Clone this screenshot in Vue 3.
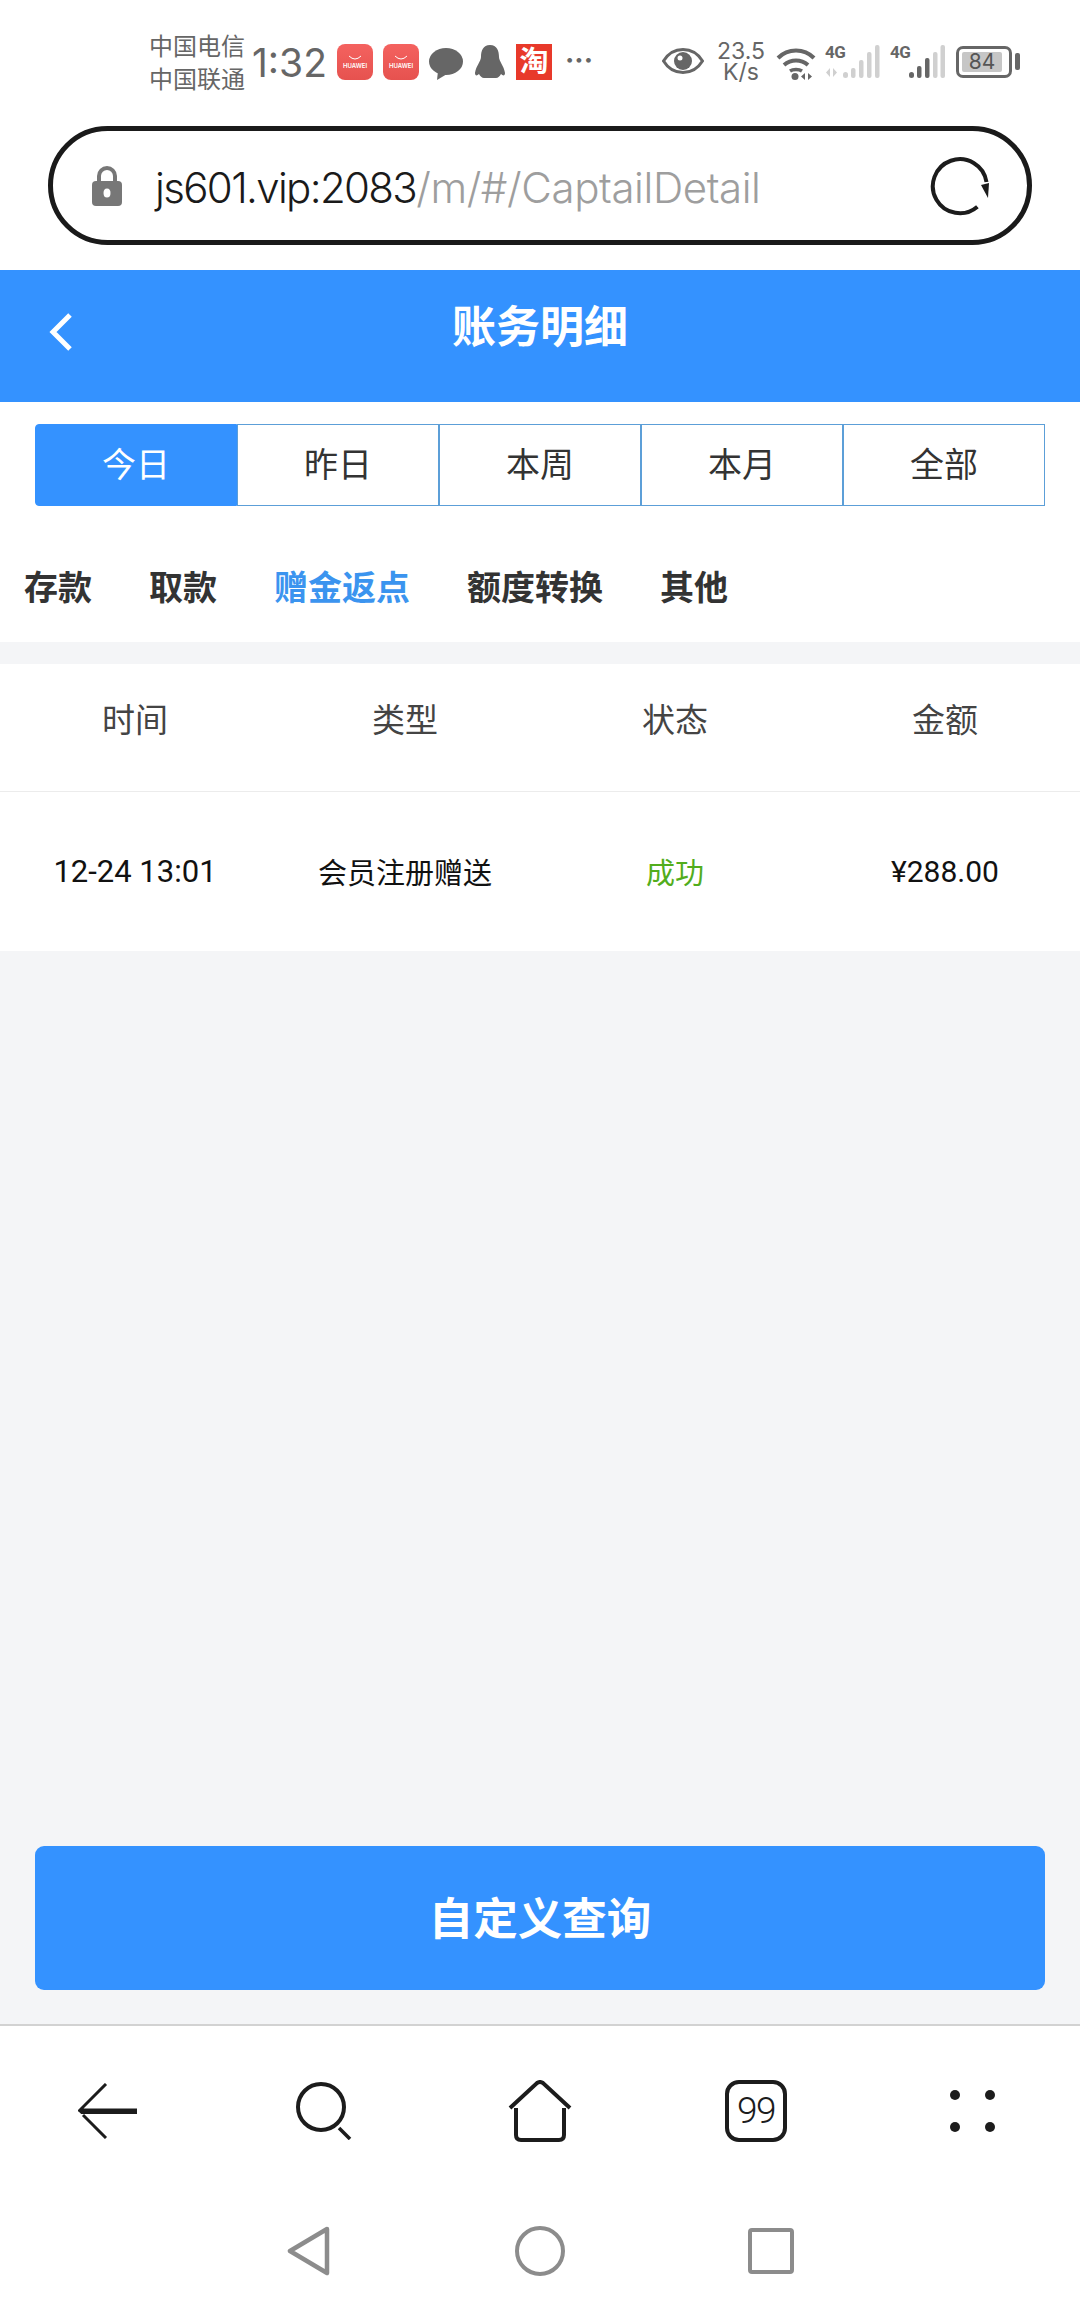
<script setup>
const ranges = ['今日', '昨日', '本周', '本月', '全部']
const cats = ['存款', '取款', '赠金返点', '额度转换', '其他']
const heads = ['时间', '类型', '状态', '金额']
</script>

<template>
  <div class="page">
    <div class="status">
      <div class="carrier"><span>中国电信</span><span>中国联通</span></div>
      <span class="time">1:32</span>
      <div class="hw first"><svg width="16" height="7" viewBox="0 0 16 7"><path d="M2 1q6 6 12 0" fill="none" stroke="#fff" stroke-width="1"/></svg><span>HUAWEI</span></div>
      <div class="hw second"><svg width="16" height="7" viewBox="0 0 16 7"><path d="M2 1q6 6 12 0" fill="none" stroke="#fff" stroke-width="1"/></svg><span>HUAWEI</span></div>
      <svg class="bubble" width="34" height="34" viewBox="0 0 34 34"><ellipse cx="17" cy="14.500" rx="17" ry="13.500" fill="#666"/><path d="M9 24l-1 9 10-6z" fill="#666"/></svg>
      <svg class="penguin" width="32" height="34" viewBox="0 0 32 34"><path d="M16 0c7 0 9 6 9 12 0 4 5 9 6 16 0 3-2 3-4 1-1 2-3 4-5 4H10c-2 0-4-2-5-4-2 2-4 2-4-1 1-7 6-12 6-16C7 6 9 0 16 0z" fill="#666"/></svg>
      <div class="tao">淘</div>
      <span class="dots">···</span>
      <div class="status-right">
        <svg class="eye" width="42" height="26" viewBox="0 0 42 26"><path d="M1.500 13C7 4 14 1.500 21 1.500S35 4 40.500 13C35 22 28 24.500 21 24.500S7 22 1.500 13z" fill="none" stroke="#666" stroke-width="3"/><circle cx="21" cy="13" r="9" fill="#666"/><circle cx="18" cy="10" r="2.500" fill="#fff"/></svg>
        <div class="speed"><span>23.5</span><span>K/s</span></div>
        <svg class="wifi" width="40" height="34" viewBox="0 0 40 34"><path d="M2 11C12 1 28 1 38 11" fill="none" stroke="#666" stroke-width="4"/><path d="M8 18c7-6 17-6 24 0" fill="none" stroke="#666" stroke-width="4"/><path d="M14 24c3-2 9-2 12 0" fill="none" stroke="#666" stroke-width="3.500"/><circle cx="19" cy="29.500" r="3.500" fill="#666"/><path d="M29 26l-4 3.500 4 3.500zM32 26l4 3.500-4 3.500z" fill="#666"/></svg>
        <div class="sig">
          <span class="g4">4G</span>
          <svg width="55" height="34" viewBox="0 0 55 34"><g fill="#d0d0d0"><path d="M5 23l-4 4.500 4 4.500zM8 23l4 4.500-4 4.500z"/><rect x="18" y="27" width="5" height="6" rx="2.500"/><rect x="26" y="23" width="4.500" height="10" rx="2"/><rect x="34" y="15" width="4.500" height="18" rx="2"/><rect x="42" y="7" width="4.500" height="26" rx="2"/><rect x="50" y="0" width="4.500" height="33" rx="2"/></g></svg>
        </div>
        <div class="sig two">
          <span class="g4">4G</span>
          <svg width="55" height="34" viewBox="0 0 55 34"><rect x="19" y="27" width="5" height="6" rx="2.500" fill="#666"/><rect x="27" y="21" width="4.500" height="12" rx="2" fill="#666"/><rect x="35" y="13" width="4.500" height="20" rx="2" fill="#666"/><rect x="43" y="7" width="4.500" height="26" rx="2" fill="#d0d0d0"/><rect x="50.500" y="0" width="4.500" height="33" rx="2" fill="#d0d0d0"/></svg>
        </div>
        <div class="battery"><div class="level">84</div></div>
        <div class="nub"></div>
      </div>
    </div>

    <div class="urlwrap">
      <div class="url">
        <svg class="lock" width="30" height="40" viewBox="0 0 30 40"><path d="M7 17V10a8 8 0 0 1 16 0v7" fill="none" stroke="#777" stroke-width="4"/><rect x="0" y="15" width="30" height="25" rx="4" fill="#777"/><ellipse cx="15" cy="27" rx="3.500" ry="4.500" fill="#fff"/></svg>
        <div class="addr"><span class="host">js601.vip:2083</span><span class="path">/m/#/CaptailDetail</span></div>
        <svg class="reload" width="60" height="60" viewBox="0 0 60 60"><path d="M47.400 50.700A27 27 0 1 1 56.500 26" fill="none" stroke="#1c1c1c" stroke-width="4"/><path d="M51 29l8-2-1 15z" fill="#1c1c1c"/></svg>
      </div>
    </div>

    <header class="head">
      <svg class="back" width="26" height="40" viewBox="0 0 26 40"><path d="M22 3L5 20l17 17" fill="none" stroke="#fff" stroke-width="5"/></svg>
      <h1>账务明细</h1>
    </header>

    <div class="filters">
      <div class="ranges">
        <div v-for="(r, i) in ranges" :key="r" class="range" :class="{ on: i === 0 }"><span>{{ r }}</span></div>
      </div>
      <div class="cats">
        <span v-for="(c, i) in cats" :key="c" class="cat" :class="{ on: i === 2 }">{{ c }}</span>
      </div>
    </div>

    <main class="main">
      <div class="table">
        <div class="row thead"><span v-for="h in heads" :key="h">{{ h }}</span></div>
        <div class="row tbody">
          <span class="num date">12-24 13:01</span>
          <span>会员注册赠送</span>
          <span class="ok">成功</span>
          <span class="num">¥288.00</span>
        </div>
      </div>
      <button class="query">自定义查询</button>
    </main>

    <div class="toolbar">
      <div class="tools">
        <svg width="60" height="56" viewBox="0 0 60 56"><path d="M28 1L2 27h57" fill="none" stroke="#1c1c1c" stroke-width="3"/><path d="M2 27l2 2h55" fill="none" stroke="#1c1c1c" stroke-width="4"/><path d="M5 32l23 23" fill="none" stroke="#1c1c1c" stroke-width="3"/></svg>
        <svg width="56" height="58" viewBox="0 0 56 58"><circle cx="25" cy="25" r="23" fill="none" stroke="#1c1c1c" stroke-width="4"/><path d="M43 46l11 11" fill="none" stroke="#1c1c1c" stroke-width="3.500"/></svg>
        <svg width="64" height="62" viewBox="0 0 64 62"><path d="M2 28L29 3q3-2 6 0l27 25" fill="none" stroke="#1c1c1c" stroke-width="4"/><path d="M8 28v27q0 5 5 5h38q5 0 5-5V28" fill="none" stroke="#1c1c1c" stroke-width="4"/></svg>
        <div class="tabs99">99</div>
        <div class="fourdots"><i></i><i></i><i></i><i></i></div>
      </div>
      <div class="sysnav">
        <svg width="44" height="50" viewBox="0 0 44 50"><path d="M40 3L3 25l37 22z" fill="none" stroke="#8c8c8c" stroke-width="4.500" stroke-linejoin="round"/></svg>
        <svg width="50" height="50" viewBox="0 0 50 50"><circle cx="25" cy="25" r="23" fill="none" stroke="#8c8c8c" stroke-width="4"/></svg>
        <svg width="46" height="46" viewBox="0 0 46 46"><rect x="2" y="2" width="42" height="42" rx="2" fill="none" stroke="#8c8c8c" stroke-width="4"/></svg>
      </div>
    </div>
  </div>
</template>

<style>
html, body { margin: 0; background: #fff; }
</style>

<style scoped>
.page {
  width: 1080px;
  height: 2310px;
  display: flex;
  flex-direction: column;
  background: #fff;
  font-family: "Inter", "Noto Sans CJK SC", sans-serif;
  color: #333;
  overflow: hidden;
}
.status {
  height: 126px;
  box-sizing: border-box;
  padding: 30px 60px 0 149px;
  display: flex;
  align-items: flex-start;
  flex: none;
  color: #666;
}
.carrier {
  display: flex;
  flex-direction: column;
  width: 96px;
  font-size: 24px;
  line-height: 33px;
  white-space: nowrap;
}
.time {
  margin-left: 7px;
  margin-top: 10px;
  width: 77px;
  font-size: 39px;
  line-height: 46px;
  white-space: nowrap;
}
.hw {
  width: 36px;
  height: 36px;
  margin-top: 14px;
  border-radius: 8px;
  background: linear-gradient(#f4625f, #e6524f);
  display: flex;
  flex-direction: column;
  align-items: center;
  justify-content: center;
  color: #fff;
  font-size: 6px;
  line-height: 8px;
  font-weight: 600;
}
.hw.first { margin-left: 8px; }
.hw.second { margin-left: 10px; }
.bubble { margin: 17px 0 0 10px; }
.penguin { margin: 15px 0 0 11px; }
.tao {
  width: 36px;
  height: 36px;
  margin: 14px 0 0 10px;
  background: #e8392a;
  color: #fff;
  font-size: 29px;
  line-height: 36px;
  font-weight: 700;
  text-align: center;
}
.dots {
  margin: 8px 0 0 13px;
  font-size: 28px;
  line-height: 44px;
  font-weight: 700;
}
.status-right {
  margin-left: auto;
  display: flex;
  align-items: flex-start;
}
.eye { margin-top: 18px; }
.speed {
  display: flex;
  flex-direction: column;
  align-items: center;
  width: 46px;
  margin: 11px 0 0 14px;
  font-size: 23px;
  line-height: 21px;
}
.wifi { margin: 17px 0 0 12px; }
.sig { position: relative; width: 55px; height: 34px; margin: 15px 0 0 9px; }
.sig svg { position: absolute; left: 0; top: 0; }
.sig.two { margin-left: 10px; }
.g4 {
  position: absolute;
  left: 0;
  top: -1px;
  font-size: 17px;
  line-height: 16px;
  letter-spacing: -0.5px;
  font-weight: 700;
  font-family: "Roboto", sans-serif;
}
.battery {
  width: 56px;
  height: 32px;
  margin: 16px 0 0 11px;
  box-sizing: border-box;
  border: 3px solid #666;
  border-radius: 7px;
  padding: 3px;
}
.level {
  height: 100%;
  width: 40px;
  background: #c6c6c6;
  border-radius: 2px;
  font-size: 21px;
  line-height: 20px;
  text-align: center;
  color: #555;
}
.nub { width: 5px; height: 17px; margin: 23px 0 0 3px; background: #666; border-radius: 2px; }

.urlwrap { padding: 0 48px; flex: none; height: 144px; }
.url {
  height: 119px;
  box-sizing: border-box;
  border: 5px solid #1a1a1a;
  border-radius: 60px;
  display: flex;
  align-items: center;
  padding: 0 37px 0 39px;
}
.lock { flex: none; }
.addr {
  margin: 4px 0 0 33px;
  font-size: 42px;
  white-space: nowrap;
  font-family: "Inter", sans-serif;
  font-weight: 300;
}
.host { color: #1a1a1a; letter-spacing: -1.650px; }
.path { color: #9e9e9e; letter-spacing: -0.4px; }
.reload { margin-left: auto; flex: none; }

.head {
  height: 132px;
  background: #3492ff;
  flex: none;
  position: relative;
  display: flex;
  align-items: center;
  justify-content: center;
}
.head h1 {
  margin: 0 0 18px;
  color: #fff;
  font-size: 44px;
  line-height: 60px;
  font-weight: 700;
}
.back { position: absolute; left: 48px; top: 42px; }

.filters { flex: none; height: 240px; box-sizing: border-box; padding-top: 22px; }
.ranges { display: flex; margin: 0 35px; height: 82px; }
.range {
  flex: 1;
  box-sizing: border-box;
  border: 1px solid #5c9fd8;
  display: flex;
  align-items: center;
  justify-content: center;
  font-size: 34px;
  color: #333;
}
.range span { margin-bottom: 6px; }
.range:first-child { border-radius: 4px 0 0 4px; }
.range.on { background: #3492ff; color: #fff; border-color: #3492ff; }
.cats {
  display: flex;
  gap: 57px;
  padding-left: 24px;
  margin-top: 58px;
  line-height: 48px;
}
.cat { font-size: 34px; font-weight: 700; color: #333; white-space: nowrap; }
.cat.on { color: #3b94ef; }

.main {
  flex: 1;
  background: #f4f5f7;
  padding-top: 22px;
  display: flex;
  flex-direction: column;
}
.table { background: #fff; }
.row { display: grid; grid-template-columns: repeat(4, 270px); text-align: center; }
.row span { white-space: nowrap; }
.thead {
  height: 128px;
  box-sizing: border-box;
  padding-top: 32px;
  font-size: 33px;
  line-height: 48px;
  color: #444;
  border-bottom: 1px solid #ececec;
}
.tbody {
  height: 159px;
  align-items: center;
  font-size: 29px;
  color: #111;
}
.tbody span { margin-bottom: 2px; }
.tbody .num { font-family: "Roboto", sans-serif; font-size: 30px; margin-bottom: 0; }
.tbody .date { font-size: 31px; }
.ok { color: #52ad1c; }
.query {
  margin: auto 35px 34px;
  height: 144px;
  border: 0;
  border-radius: 9px;
  background: #3492ff;
  color: #fff;
  font-family: inherit;
  font-size: 44.500px;
  font-weight: 700;
  padding: 0 0 6px;
}

.toolbar {
  flex: none;
  height: 286px;
  box-sizing: border-box;
  border-top: 2px solid #d2d2d2;
  background: #fff;
}
.tools {
  display: grid;
  grid-template-columns: repeat(5, 216px);
  justify-items: center;
  align-items: center;
  height: 159px;
  padding-top: 5px;
}
.tabs99 {
  width: 62px;
  height: 62px;
  box-sizing: border-box;
  border: 4px solid #1c1c1c;
  border-radius: 14px;
  display: flex;
  align-items: center;
  justify-content: center;
  font-size: 37px;
  font-weight: 300;
  color: #1c1c1c;
  letter-spacing: -1.500px;
  font-family: "Roboto", sans-serif;
}
.fourdots {
  display: grid;
  grid-template-columns: 10px 10px;
  gap: 22px 25px;
  justify-content: center;
}
.fourdots i { width: 10px; height: 10px; border-radius: 50%; background: #1c1c1c; }
.sysnav {
  display: grid;
  grid-template-columns: repeat(3, 231px);
  justify-content: center;
  justify-items: center;
  align-items: center;
  height: 50px;
  margin-top: 36px;
}
</style>
